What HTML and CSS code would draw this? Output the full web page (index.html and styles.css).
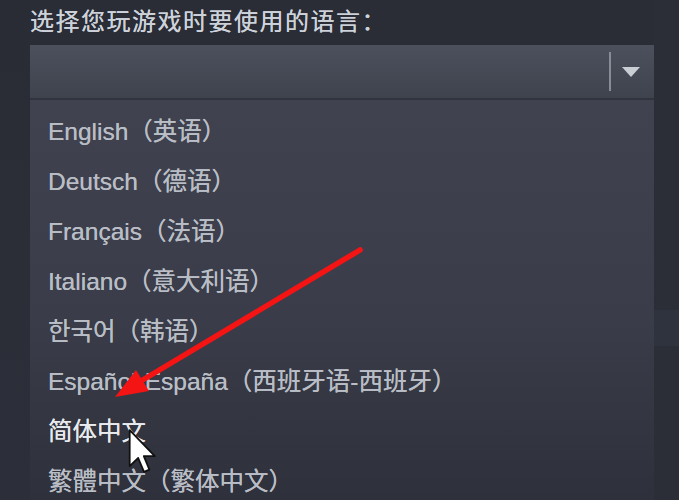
FILE: index.html
```html
<!DOCTYPE html>
<html lang="zh-CN">
<head>
<meta charset="utf-8">
<title>语言选择</title>
<link rel="stylesheet" href="styles.css">
</head>
<body>
<div class="page">
  <div class="side-left"></div>
  <div class="main">
    <div class="heading">选择您玩游戏时要使用的语言：</div>
    <div class="select">
      <div class="select-value"></div>
      <div class="select-sep"></div>
      <div class="select-arrow"></div>
    </div>
    <ul class="options">
      <li class="option">English（英语）</li>
      <li class="option">Deutsch（德语）</li>
      <li class="option">Français（法语）</li>
      <li class="option">Italiano（意大利语）</li>
      <li class="option ko">한국어（韩语）</li>
      <li class="option">Español-España（西班牙语-西班牙）</li>
      <li class="option hover">简体中文</li>
      <li class="option">繁體中文（繁体中文）</li>
    </ul>
  </div>
  <div class="side-right">
    <div class="side-block"></div>
  </div>
</div>
<svg class="annot" width="679" height="500" viewBox="0 0 679 500">
  <line x1="360" y1="250" x2="141" y2="381" stroke="#f41414" stroke-width="5.5" stroke-linecap="round"/>
  <polygon points="115,397 149,391 136,370" fill="#f41414"/>
</svg>
<svg class="cursor" width="30" height="47" viewBox="-1 -1 13 21">
  <path d="M0,0 L0,16 L3.8,12.4 L6.4,18.6 L8.8,17.6 L6.3,11.6 L11.2,11.6 Z" fill="#ffffff" stroke="#111" stroke-width="0.8" stroke-linejoin="round"/>
</svg>
</body>
</html>
```
FILE: styles.css
```css
html, body {
  margin: 0;
  padding: 0;
  width: 679px;
  height: 500px;
  overflow: hidden;
  background: #2a2d36;
}
.page {
  display: flex;
  width: 679px;
  height: 500px;
  font-family: "Liberation Sans", "Noto Sans CJK SC", sans-serif;
}
.side-left {
  width: 30px;
  background: linear-gradient(#2a2c35, #2c2f39);
}
.main {
  width: 624px;
  display: flex;
  flex-direction: column;
  overflow: hidden;
}
.side-right {
  flex: 1;
  background: #2b2e37;
  display: flex;
  flex-direction: column;
  padding-top: 310px;
}
.side-block {
  height: 36px;
  background: #2f333d;
}
.heading {
  flex-shrink: 0;
  height: 45px;
  line-height: 40px;
  font-size: 24px;
  letter-spacing: 1.5px;
  color: #cdd2da;
  font-family: "Noto Sans CJK SC", sans-serif;
  white-space: nowrap;
  text-shadow: 0 0 0.6px #cdd2da;
}
.select {
  flex-shrink: 0;
  height: 53px;
  border-bottom: 2px solid #31343d;
  background: linear-gradient(#4b505c, #3f434e);
  display: flex;
  align-items: center;
}
.select-value {
  flex: 1;
}
.select-sep {
  width: 2px;
  height: 39px;
  background: #878c96;
  margin-right: 11px;
}
.select-arrow {
  width: 0;
  height: 0;
  border-left: 9px solid transparent;
  border-right: 9px solid transparent;
  border-top: 10px solid #c9cdd4;
  margin-right: 14px;
}
.options {
  flex-shrink: 0;
  height: 400px;
  box-sizing: border-box;
  list-style: none;
  margin: 0;
  padding: 7px 0 0 18px;
  background: linear-gradient(#40434f, #3a3d49 55%, #2e313b);
}
.option {
  height: 50px;
  line-height: 50px;
  font-size: 24.5px;
  color: #b9bdc5;
  white-space: nowrap;
  text-shadow: 0 0 0.6px #b9bdc5;
}
.option.hover {
  color: #e8eaee;
  text-shadow: 0 0 0.6px #e8eaee;
}
.annot {
  position: absolute;
  left: 0;
  top: 0;
  pointer-events: none;
}
.cursor {
  position: absolute;
  left: 127px;
  top: 428px;
}
```
